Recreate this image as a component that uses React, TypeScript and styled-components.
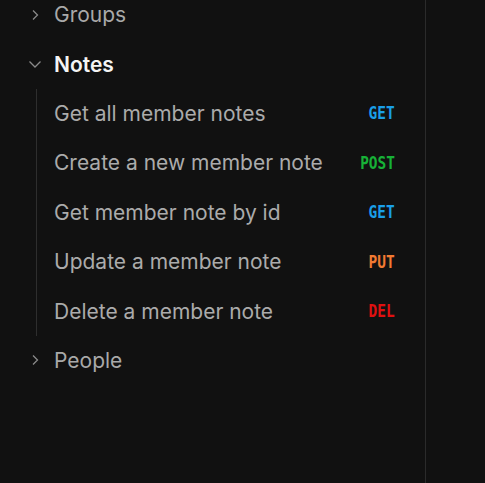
import React from "react";
import styled, { createGlobalStyle } from "styled-components";

const Global = createGlobalStyle`
    html, body {
        margin: 0;
        padding: 0;
        background: #111111;
        height: 100%;
        overflow: hidden;
    }
    #root {
        height: 100%;
    }
`

let Page = styled.div`
    display: flex;
    height: 100vh;
    background: #111111;
    font-family: Inter, "Noto Sans", sans-serif;
`

let Sidebar = styled.nav`
    width: 425px;
    border-right: 1px solid #2b2b2b;
    display: flex;
    flex-direction: column;
    margin-top: -10px;
`

let Main = styled.div`
    flex: 1;
`

let Folder = styled.div<{ open?: boolean }>`
    display: flex;
    align-items: center;
    height: 49.4px;
    padding-left: 28px;
    font-size: 21px;
    font-weight: ${p => (p.open ? 600 : 400)};
    color: ${p => (p.open ? "#f4f4f4" : "#a9a9a9")};
`

let Chevron = styled.span`
    width: 14px;
    height: 14px;
    display: flex;
    align-items: center;
    justify-content: center;
    margin-right: 12px;
    color: #8a8a8a;
`

let Children = styled.div`
    margin-left: 36px;
    border-left: 1px solid #2e2e2e;
`

let Item = styled.div`
    display: flex;
    align-items: center;
    justify-content: space-between;
    height: 49.4px;
    padding-left: 17px;
    padding-right: 30px;
    font-size: 21px;
    color: #ababab;
`

let Method = styled.span<{ color: string }>`
    font-family: "DejaVu Sans Mono", "Liberation Mono", monospace;
    font-weight: 700;
    font-size: 17px;
    color: ${p => p.color};
    display: inline-block;
    transform: scaleX(0.85);
    transform-origin: right center;
`

const methodColors: Record<string, string> = {
    GET: "#1a9fe8",
    POST: "#17b137",
    PUT: "#f27a32",
    DEL: "#e01010",
}

const notes = [
    { name: "Get all member notes", method: "GET" },
    { name: "Create a new member note", method: "POST" },
    { name: "Get member note by id", method: "GET" },
    { name: "Update a member note", method: "PUT" },
    { name: "Delete a member note", method: "DEL" },
]

function ChevronRight() {
    return (
        <svg width="10" height="12" viewBox="0 0 10 12" fill="none">
            <path d="M3 1.5L7.5 6L3 10.5" stroke="currentColor" strokeWidth="1.3" />
        </svg>
    )
}

function ChevronDown() {
    return (
        <svg width="14" height="10" viewBox="0 0 14 10" fill="none">
            <path d="M1.5 2.5L7 8L12.5 2.5" stroke="currentColor" strokeWidth="1.3" />
        </svg>
    )
}

export default function App() {
    return (
        <>
            <Global />
            <Page>
                <Sidebar>
                    <Folder>
                        <Chevron><ChevronRight /></Chevron>
                        Groups
                    </Folder>
                    <Folder open>
                        <Chevron><ChevronDown /></Chevron>
                        Notes
                    </Folder>
                    <Children>
                        {notes.map(n => (
                            <Item key={n.name}>
                                <span>{n.name}</span>
                                <Method color={methodColors[n.method]}>{n.method}</Method>
                            </Item>
                        ))}
                    </Children>
                    <Folder>
                        <Chevron><ChevronRight /></Chevron>
                        People
                    </Folder>
                </Sidebar>
                <Main />
            </Page>
        </>
    )
}
